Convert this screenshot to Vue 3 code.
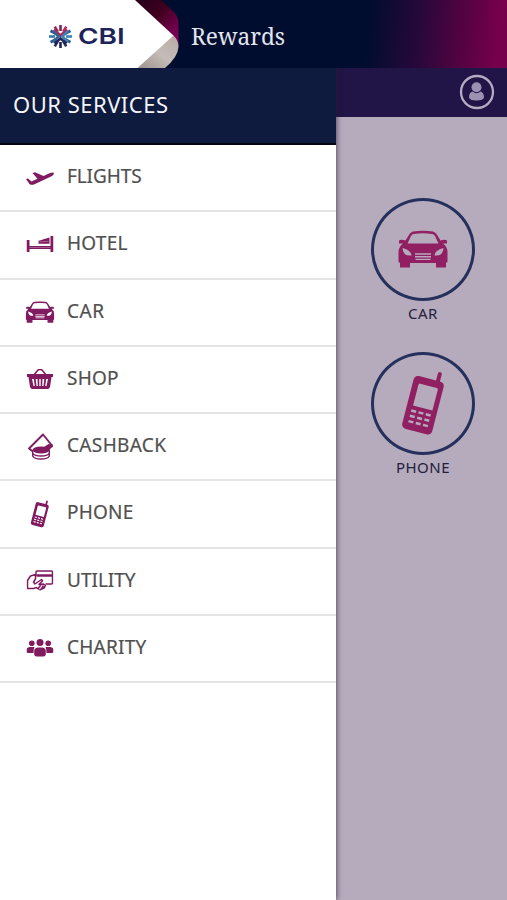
<template>
  <div class="app-screen">
    <header class="brand-bar">
      <svg class="brand-ribbon" viewBox="0 0 190 68">
        <defs>
          <linearGradient id="ribbonTop" x1="0" y1="0" x2="1" y2="1">
            <stop offset="0" stop-color="#210018" />
            <stop offset="0.45" stop-color="#420020" />
            <stop offset="0.75" stop-color="#70004a" />
            <stop offset="1" stop-color="#85005a" />
          </linearGradient>
          <linearGradient id="ribbonBottom" x1="1" y1="0" x2="0" y2="1">
            <stop offset="0" stop-color="#b5aaa6" />
            <stop offset="0.5" stop-color="#c5bcb8" />
            <stop offset="1" stop-color="#9b918e" />
          </linearGradient>
        </defs>
        <path d="M134 0H161L174 12Q178.500 17 178.500 25V46L170 38Z" fill="url(#ribbonTop)" />
        <path d="M136 68L173 35Q178.500 40 178.500 47Q178 57 165 68Z" fill="url(#ribbonBottom)" />
        <path d="M0 0H135L173.500 35.500L137.500 68H0Z" fill="#fff" />
        <g transform="translate(60.500 36.500)">
          <path
            v-for="(color, index) in burstColors"
            :key="index"
            d="M0 -5.500V-11.500"
            stroke-width="2.600"
            :stroke="color"
            :transform="`rotate(${index * 30})`"
          />
          <g fill="none" stroke-width="2.500">
            <path d="M-6.500 -7L0 -1L6.500 -7" stroke="#a82c5c" />
            <path d="M-7.500 -5.500L-2 0L-7.500 5.500" stroke="#2f6595" />
            <path d="M7.500 -5.500L2 0L7.500 5.500" stroke="#3f82b5" />
            <path d="M-6 7L0 2L6 7" stroke="#1f2456" />
          </g>
        </g>
      </svg>
      <span class="brand-name">CBI</span>
      <span class="brand-title">Rewards</span>
    </header>

    <div class="body">
      <nav class="drawer">
        <h1 class="drawer-title">OUR SERVICES</h1>
        <ul class="service-list">
          <li v-for="service in services" :key="service.id" class="service">
            <svg class="service-icon" viewBox="0 0 30 30">
              <use :href="`#icon-${service.id}`" v-bind="service.box" />
            </svg>
            <span class="service-label" :style="{ letterSpacing: service.spacing }">{{ service.label }}</span>
          </li>
        </ul>
      </nav>

      <main class="content">
        <div class="toolbar">
          <svg class="profile" viewBox="0 0 36 36">
            <circle cx="18" cy="18" r="16" fill="none" stroke="#b5abc2" stroke-width="2.300" />
            <circle cx="17.500" cy="13.300" r="5" fill="#9d91b2" />
            <path d="M10 23.500Q10 18.500 13.500 17.500Q17.500 21 21.500 17.500Q25 18.500 25 23.500Q24.500 26.500 17.500 26.500T10 23.500Z" fill="#9d91b2" />
          </svg>
        </div>
        <div class="tiles">
          <div v-for="tile in tiles" :key="tile.id" class="tile">
            <div class="tile-circle">
              <svg :class="`tile-${tile.id}`"><use :href="`#icon-${tile.id}`" /></svg>
            </div>
            <span class="tile-label">{{ tile.label }}</span>
          </div>
        </div>
      </main>
    </div>

    <svg class="symbols">
      <symbol id="icon-flights" viewBox="0 0 28 14">
        <path d="M0 7.500L2 7L5.500 10L11.500 7.300L6.500 1.500L9 0.800L17.500 4.500L23.500 1.800Q27 0.200 28 1.500Q28 3.500 25 5L9 12.500Q5.500 14.200 3.500 12.500Z" />
      </symbol>
      <symbol id="icon-hotel" viewBox="0 0 27 17">
        <path d="M0 4H3V10H24V0H27V16H24V13H3V16H0Z" />
        <path d="M12 7.800V4.800L15 4L17 3.200L23 1.500V7.800Z" />
        <path d="M3 11.500H24" stroke="#fff" stroke-opacity="0.350" stroke-width="0.800" />
        <path d="M13 5.800L22 5.300" stroke="#fff" stroke-opacity="0.500" stroke-width="0.600" />
      </symbol>
      <symbol id="icon-car" viewBox="0 0 50 38">
        <path
          fill-rule="evenodd"
          d="M15 1.500Q25 0 35 1.500Q37 2 38.500 4L42.500 10.500Q47 9 49 10.500V13.500H45Q49.500 17 49.500 22L49.500 32L48 33V37.500H38V33H12V37.500H2V33L0.500 32L0.500 22Q0.500 17 5 13.500H1V10.500Q3 9 7.500 10.500L11.500 4Q13 2 15 1.500Z
             M16 4Q14 4 13 6L9.500 13.500H40.500L37 6Q36 4 34 4Q25 2.500 16 4Z
             M4.500 18Q13 20 13.500 25.500Q5 26.500 4.500 18Z M45.500 18Q37 20 36.500 25.500Q45 26.500 45.500 18Z
             M17 23.300H33V24.700H17Z M17 26H33V27.400H17Z M17.500 28.700H32.500V30H17.500Z"
        />
      </symbol>
      <symbol id="icon-shop" viewBox="0 0 26 20">
        <path d="M7 6L10.500 1.500Q13 -0.500 15.500 1.500L19 6" fill="none" stroke="currentColor" stroke-width="1.600" />
        <path fill-rule="evenodd" d="M0 5H26V8H24.500L23 18Q22.500 20 20.500 20H5.500Q3.500 20 3 18L1.500 8H0Z M5 10L6.500 17H7.800L6.800 10Z M8.700 10L9.500 17H10.800L10.500 10Z M12.300 10V17H13.700V10Z M15.500 10L15.200 17H16.500L17.300 10Z M19.200 10L18.200 17H19.500L21 10Z" />
      </symbol>
      <symbol id="icon-cashback" viewBox="0 0 26 27">
        <path d="M5.500 18.500L1.500 15.500L15.500 1.500L24.500 12.500L21.500 14.500" fill="none" stroke="currentColor" stroke-width="1.900" stroke-linejoin="round" />
        <ellipse cx="13.500" cy="17" rx="8.500" ry="3.500" />
        <path d="M5.200 17V23Q6.500 26 13.500 26T21.800 23V17M5.500 20.500Q7 23 13.500 23T21.500 20.500" fill="none" stroke="currentColor" stroke-width="1.400" />
        <path d="M15 15Q18 13 21 11L25 11.500L25.500 13.500Q22 16 21.500 18Z" />
      </symbol>
      <symbol id="icon-phone" viewBox="0 0 45 65">
        <path
          transform="translate(22 34) rotate(14.500)"
          fill-rule="evenodd"
          d="M-11 -27H6.500V-35Q8.500 -37.500 10.500 -35V-27Q15.500 -27 15.500 -22V22Q15.500 27.500 10.500 27.500H-10.500Q-15.500 27.500 -15.500 22V-22Q-15.500 -27 -11 -27Z
             M-8 -20Q-9.500 -20 -9.500 -18V3H10.500V-18Q10.500 -20 9 -20Z
             M-10 7H-5V9.500H-10Z M-2.500 7H2.500V9.500H-2.500Z M5 7H10V9.500H5Z
             M-10 12.500H-5V15H-10Z M-2.500 12.500H2.500V15H-2.500Z M5 12.500H10V15H5Z
             M-10 18H-5V20.500H-10Z M-2.500 18H2.500V20.500H-2.500Z M5 18H10V20.500H5Z"
        />
      </symbol>
      <symbol id="icon-utility" viewBox="0 0 27 21">
        <g fill="none" stroke="currentColor" stroke-width="1.500" stroke-linejoin="round">
          <path d="M9.500 6V2Q9.500 1 10.500 1H25Q26 1 26 2V13Q26 14 25 14H19" />
          <path d="M9 4.500L4 6L1 10.500V18.500H7L10 17.500L12.500 19.500M9 4.500V9L7 12L8.500 14L15 9.500L16 11L12.500 14.500L17 14L19 15.500L17.500 18L13 20M14.500 15L11.500 18.500M17 15.500L14.500 19.500" />
        </g>
        <path d="M10 4.300H26V6.800H10Z" />
      </symbol>
      <symbol id="icon-charity" viewBox="0 0 27 18">
        <circle cx="5.300" cy="4.200" r="2.800" />
        <circle cx="21.700" cy="4.200" r="2.800" />
        <circle cx="13.500" cy="3.500" r="3.500" />
        <path d="M3 8H8Q7 9.500 7 14H1.500Q0 14 0 12.500V11Q0 8.500 3 8ZM24 8H19Q20 9.500 20 14H25.500Q27 14 27 12.500V11Q27 8.500 24 8ZM11 8.500H16Q19.300 9 19.300 12V15.500Q19 17.500 17 17.500H10Q8 17.500 7.700 15.500V12Q7.700 9 11 8.500Z" />
      </symbol>
    </svg>
  </div>
</template>

<script setup>
const burstColors = [
  '#7c2457', '#b52f5f', '#2a5a8a', '#3f82b5', '#2b5788', '#272c63',
  '#1c2255', '#252b60', '#2a5a8a', '#3a76a5', '#29517f', '#8d2a58',
];

// box places each symbol inside the 30x30 icon slot
const services = [
  { id: 'flights', label: 'FLIGHTS', spacing: '-0.1px', box: { x: 1, y: 9.5, width: 28, height: 14 } },
  { id: 'hotel', label: 'HOTEL', spacing: '0.25px', box: { x: 1.5, y: 7, width: 27, height: 17 } },
  { id: 'car', label: 'CAR', spacing: '0.5px', box: { x: 0.5, y: 5, width: 29, height: 22 } },
  { id: 'shop', label: 'SHOP', spacing: '0.2px', box: { x: 2, y: 6, width: 26, height: 20 } },
  { id: 'cashback', label: 'CASHBACK', spacing: '0.35px', box: { x: 2.5, y: 2, width: 26, height: 27 } },
  { id: 'phone', label: 'PHONE', spacing: '0.2px', box: { x: 5, y: 2, width: 20, height: 28 } },
  { id: 'utility', label: 'UTILITY', spacing: '0', box: { x: 1.5, y: 5, width: 27, height: 21 } },
  { id: 'charity', label: 'CHARITY', spacing: '0.25px', box: { x: 1.5, y: 7, width: 27, height: 18 } },
];

const tiles = [
  { id: 'car', label: 'CAR' },
  { id: 'phone', label: 'PHONE' },
];
</script>

<style>
body {
  margin: 0;
  overflow: hidden;
}
</style>

<style scoped>
.app-screen {
  width: 507px;
  height: 900px;
  overflow: hidden;
  font-family: "Noto Sans", "Open Sans", sans-serif;
}

.brand-bar {
  position: relative;
  z-index: 2;
  height: 68px;
  background: linear-gradient(95deg, #000d2e 72%, #26083b 82%, #500340 90%, #77004d 98%);
}

.brand-ribbon {
  display: block;
  width: 190px;
  height: 68px;
}

.brand-name,
.brand-title {
  position: absolute;
  white-space: nowrap;
  transform-origin: left;
}

.brand-name {
  left: 77.500px;
  top: 21px;
  color: #20225a;
  font: 600 22px/30px Inter, sans-serif;
  transform: scaleX(1.27);
}

.brand-title {
  left: 191px;
  top: 21px;
  color: #e3e6ee;
  font: 23px/30px "Noto Serif", "DejaVu Serif", serif;
  transform: scaleX(0.985);
}

.body {
  display: flex;
  height: 832px;
}

.drawer {
  position: relative;
  z-index: 1;
  width: 336px;
  background: #fff;
  box-shadow: 1px 0 5px rgba(40, 30, 50, 0.65);
}

.drawer-title {
  box-sizing: border-box;
  height: 77px;
  margin: 0;
  padding: 0 13px;
  border-bottom: 2px solid #02040f;
  background: #0e1b3e;
  color: #f4f5f9;
  font-size: 22px;
  font-weight: 400;
  letter-spacing: 0.500px;
  line-height: 73px;
}

.service-list {
  margin: 0;
  padding: 0;
  list-style: none;
}

.service {
  box-sizing: border-box;
  display: flex;
  align-items: center;
  gap: 12px;
  height: 67.250px;
  padding: 0 0 2px 25px;
  border-bottom: 2px solid #e4e4e4;
}

.service-icon {
  width: 30px;
  height: 30px;
  color: #801b60;
  fill: currentColor;
}

.service-label {
  padding-bottom: 1px;
  color: #505050;
  font-size: 19px;
  line-height: 26px;
  -webkit-text-stroke: 0.200px #505050;
}

.content {
  flex: 1;
  background: #b5abbd;
}

.toolbar {
  display: flex;
  justify-content: flex-end;
  box-sizing: border-box;
  height: 49px;
  padding: 6px 12px 0 0;
  background: #211447;
}

.profile {
  width: 36px;
  height: 36px;
}

.tiles {
  display: flex;
  flex-direction: column;
  align-items: center;
  gap: 26px;
  padding: 80.500px 0 0 3px;
}

.tile {
  display: flex;
  flex-direction: column;
  align-items: center;
  height: 128px;
}

.tile-circle {
  display: flex;
  align-items: center;
  justify-content: center;
  box-sizing: border-box;
  width: 104px;
  height: 104px;
  border: 3px solid #26305c;
  border-radius: 50%;
  color: #912062;
  fill: currentColor;
}

.tile-car {
  width: 50px;
  height: 38px;
}

.tile-phone {
  width: 45px;
  height: 65px;
}

.tile-label {
  color: #24203a;
  font-size: 15px;
  letter-spacing: 0.500px;
  line-height: 25px;
}

.symbols {
  position: absolute;
  width: 0;
  height: 0;
}
</style>
